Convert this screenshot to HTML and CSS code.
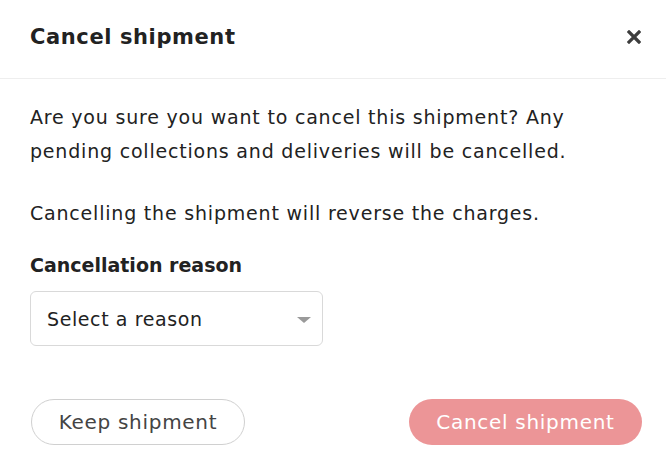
FILE: index.html
```html
<!DOCTYPE html>
<html lang="en">
<head>
    <meta charset="UTF-8">
    <meta name="viewport" content="width=device-width, initial-scale=1.0">
    <title>Cancel shipment</title>
    <link rel="stylesheet" href="styles.css">
</head>
<body>
    <div class="modal">
        <div class="modal-header">
            <h2>Cancel shipment</h2>
            <button class="close-btn" aria-label="Close">
                <svg width="14" height="14" viewBox="0 0 14 14">
                    <path d="M2 2 L12 12 M12 2 L2 12" stroke="#3d3d3d" stroke-width="3.2" stroke-linecap="square"/>
                </svg>
            </button>
        </div>

        <div class="modal-body">
            <p>Are you sure you want to cancel this shipment? Any pending collections and deliveries will be cancelled.</p>
            <p>Cancelling the shipment will reverse the charges.</p>

            <label for="reason" class="field-label">Cancellation reason</label>
            <div class="select-wrap">
                <select id="reason">
                    <option>Select a reason</option>
                </select>
            </div>
        </div>

        <div class="modal-footer">
            <button class="btn btn-secondary">Keep shipment</button>
            <button class="btn btn-danger" disabled>Cancel shipment</button>
        </div>
    </div>
</body>
</html>
```

FILE: styles.css
```css
body {
    margin: 0;
    font-family: "DejaVu Sans", Verdana, sans-serif;
    color: #222;
    background: #fff;
}
.modal {
    width: 666px;
}
.modal-header {
    display: flex;
    align-items: center;
    justify-content: space-between;
    height: 74px;
    padding: 0 25px 4px 30px;
    border-bottom: 1px solid #eeeeee;
}
.modal-header h2 {
    margin: 0;
    font-size: 21px;
    font-weight: 700;
    letter-spacing: 0.6px;
}
.close-btn {
    border: none;
    background: none;
    padding: 0;
    width: 14px;
    height: 14px;
    cursor: pointer;
}
.close-btn svg {
    display: block;
}
.modal-body {
    padding: 21px 25px 0 30px;
}
.modal-body p {
    margin: 0 0 28px;
    font-size: 19px;
    letter-spacing: 0.8px;
    line-height: 34px;
    width: 560px;
}
.field-label {
    display: block;
    font-size: 19px;
    font-weight: 700;
    line-height: 34px;
    margin-top: -10px;
}
.select-wrap {
    position: relative;
    width: 293px;
    margin-top: 9px;
}
.select-wrap::after {
    content: "";
    position: absolute;
    right: 12px;
    top: 26px;
    border-left: 7px solid transparent;
    border-right: 7px solid transparent;
    border-top: 6px solid #9a9a9a;
    pointer-events: none;
}
select {
    appearance: none;
    width: 100%;
    height: 55px;
    padding: 0 16px;
    border: 1px solid #d9d9d9;
    border-radius: 6px;
    background: #fff;
    font-family: inherit;
    font-size: 19px;
    letter-spacing: 0.6px;
    color: #222;
}
.modal-footer {
    display: flex;
    justify-content: space-between;
    padding: 53px 24px 0 31px;
}
.btn {
    height: 46px;
    padding: 0 10px;
    border-radius: 23px;
    font-family: inherit;
    font-size: 20px;
    letter-spacing: 0.7px;
    cursor: pointer;
}
.btn-secondary {
    width: 214px;
    background: #fff;
    color: #444;
    border: 1px solid #d0d0d0;
}
.btn-danger {
    width: 233px;
    background: #ec9597;
    color: #fff;
    border: none;
}
```
